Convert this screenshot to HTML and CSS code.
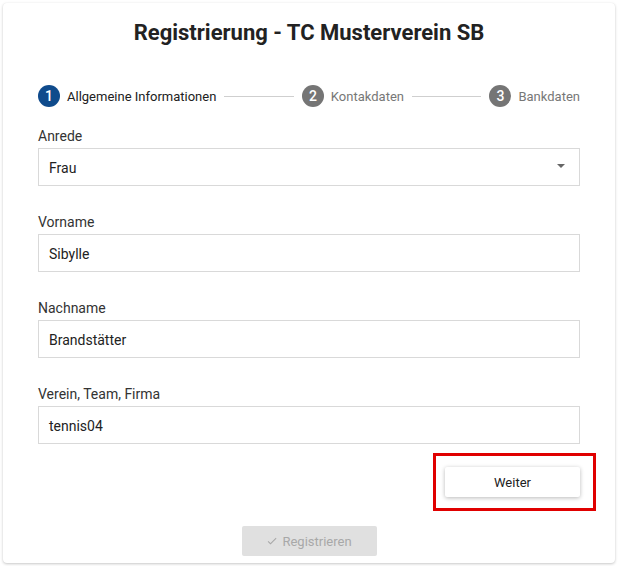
FILE: index.html
```html
<!DOCTYPE html>
<html lang="de"><head>
    <meta charset="UTF-8">
    <meta name="viewport" content="width=device-width, initial-scale=1.0">
    <title>Registrierung - TC Musterverein SB</title>
    <link rel="stylesheet" href="styles.css">
</head>
<body>
    <div class="card">
        <h1 class="title">Registrierung - TC Musterverein SB</h1>

        <div class="stepper">
            <div class="step active">
                <span class="step-num">1</span>
                <span class="step-label">Allgemeine Informationen</span>
            </div>
            <div class="step-line"></div>
            <div class="step">
                <span class="step-num">2</span>
                <span class="step-label">Kontakdaten</span>
            </div>
            <div class="step-line"></div>
            <div class="step">
                <span class="step-num">3</span>
                <span class="step-label">Bankdaten</span>
            </div>
        </div>

        <div class="field">
            <label class="field-label">Anrede</label>
            <div class="input select">
                <span>Frau</span>
                <span class="caret"></span>
            </div>
        </div>
        <div class="field">
            <label class="field-label">Vorname</label>
            <div class="input">Sibylle</div>
        </div>
        <div class="field">
            <label class="field-label">Nachname</label>
            <div class="input">Brandstätter</div>
        </div>
        <div class="field">
            <label class="field-label">Verein, Team, Firma</label>
            <div class="input">tennis04</div>
        </div>

        <div class="actions">
            <div class="highlight">
                <button class="btn btn-next">Weiter</button>
            </div>
        </div>

        <div class="submit-row">
            <button class="btn btn-submit" disabled>
                <svg width="12" height="12" viewBox="0 0 24 24"><path d="M9 16.2L4.8 12l-1.4 1.4L9 19 21 7l-1.4-1.4z" fill="#a8a8a8"/></svg>
                Registrieren
            </button>
        </div>
    </div>
</body>
</html>
```

FILE: styles.css
```css
body {
    font-family: Roboto, 'Liberation Sans', sans-serif;
    margin: 0;
    padding: 0;
    background-color: #ffffff;
    color: #212121;
}
.card {
    margin: 3px;
    width: 612px;
    height: 560px;
    box-sizing: border-box;
    padding: 17px 35px 7px;
    background-color: #fff;
    border-radius: 4px;
    box-shadow: 0 1px 3px rgba(0,0,0,0.22), 0 0 1px rgba(0,0,0,0.06);
}
.title {
    margin: 0;
    font-size: 22px;
    line-height: 26px;
    font-weight: 700;
    text-align: center;
    color: #222;
}
.stepper {
    display: flex;
    align-items: center;
    height: 24px;
    margin-top: 38px;
}
.step {
    display: flex;
    align-items: center;
}
.step-num {
    width: 22px;
    height: 22px;
    border-radius: 50%;
    background-color: #757575;
    color: #fff;
    font-size: 14px;
    font-weight: 500;
    display: flex;
    align-items: center;
    justify-content: center;
}
.step-label {
    margin-left: 7px;
    font-size: 13px;
    color: #777;
}
.step.active .step-num {
    background-color: #0f4b8c;
}
.step.active .step-label {
    color: #212121;
}
.step-line {
    flex: 1;
    height: 1px;
    background-color: #cfcfcf;
    margin: 0 8px;
}
.field {
    margin-top: 18px;
}
.field + .field {
    margin-top: 26px;
}
.field-label {
    display: block;
    font-size: 14px;
    line-height: 20px;
    color: #333;
    margin-bottom: 2px;
}
.input {
    height: 38px;
    box-sizing: border-box;
    border: 1px solid #d9d9d9;
    padding: 1px 10px 0;
    font-size: 14px;
    color: #222;
    display: flex;
    align-items: center;
}
.select {
    justify-content: space-between;
}
.caret {
    width: 0;
    height: 0;
    border-left: 4px solid transparent;
    border-right: 4px solid transparent;
    border-top: 4px solid #666;
    margin-right: 4px;
    margin-top: -4px;
}
.actions {
    display: flex;
    justify-content: flex-end;
    margin-top: 23px;
}
.highlight {
    position: relative;
}
.highlight::after {
    content: '';
    position: absolute;
    top: -14px;
    left: -12px;
    right: -16px;
    bottom: -14px;
    border: 3px solid #e00000;
    pointer-events: none;
}
.btn {
    width: 135px;
    height: 30px;
    border: none;
    border-radius: 2px;
    font-family: inherit;
    font-size: 13px;
    cursor: pointer;
}
.btn-next {
    background-color: #fff;
    color: #212121;
    box-shadow: 0 1px 4px rgba(0,0,0,0.28);
}
.submit-row {
    display: flex;
    justify-content: center;
    margin-top: 29px;
}
.btn-submit {
    background-color: #e0e0e0;
    color: #a8a8a8;
    display: flex;
    align-items: center;
    justify-content: center;
    gap: 4px;
    cursor: default;
}
```
